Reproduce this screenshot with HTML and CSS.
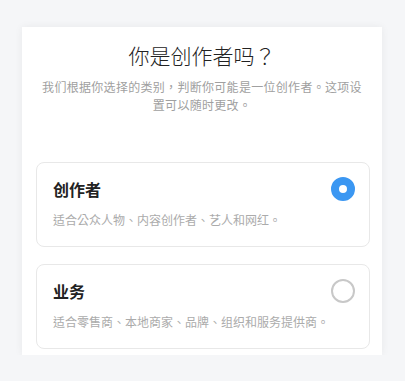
FILE: index.html
```html
<!DOCTYPE html>
<html lang="zh-Hant">
<head>
<meta charset="utf-8">
<link rel="stylesheet" href="styles.css">
</head>
<body>
<div class="panel">
  <h1 class="title">你是创作者吗？</h1>
  <p class="subtitle">我们根据你选择的类别，判断你可能是一位创作者。这项设置可以随时更改。</p>
  <div class="options">
    <div class="option">
      <div class="option-head">
        <span class="option-title">创作者</span>
        <span class="radio radio-on"></span>
      </div>
      <p class="option-desc">适合公众人物、内容创作者、艺人和网红。</p>
    </div>
    <div class="option">
      <div class="option-head">
        <span class="option-title">业务</span>
        <span class="radio"></span>
      </div>
      <p class="option-desc">适合零售商、本地商家、品牌、组织和服务提供商。</p>
    </div>
  </div>
</div>
</body>
</html>
```
FILE: styles.css
```css
html, body {
  margin: 0;
  padding: 0;
  background: #f5f6f8;
  font-family: "Noto Sans CJK TC", "Noto Sans CJK SC", sans-serif;
}
.panel {
  margin: 27px 23px 0 22px;
  width: 360px;
  background: #ffffff;
  box-shadow: 0 0 8px rgba(0, 0, 0, 0.06);
  padding: 13px 0 6px;
  box-sizing: border-box;
}
.title {
  margin: 0;
  text-align: center;
  font-size: 21px;
  line-height: 30px;
  font-weight: 300;
  color: #222;
}
.subtitle {
  margin: 8px 0 0;
  padding: 0 16px;
  text-align: center;
  font-size: 12px;
  letter-spacing: 0.3px;
  line-height: 18px;
  color: #a0a0a0;
}
.options {
  margin: 48px 12px 0 14px;
  display: flex;
  flex-direction: column;
  gap: 17px;
}
.option {
  border: 1px solid #e8e8e8;
  border-radius: 8px;
  padding: 14px 14px 17px 16px;
}
.option-head {
  display: flex;
  align-items: center;
  justify-content: space-between;
  height: 24px;
}
.option-title {
  font-size: 16px;
  font-weight: 700;
  color: #222;
}
.radio {
  width: 24px;
  height: 24px;
  box-sizing: border-box;
  border-radius: 50%;
  border: 2px solid #c8c8c8;
}
.radio-on {
  border: 8px solid #3b97f2;
  background: #fff;
}
.option-desc {
  margin: 10px 0 0;
  font-size: 12px;
  line-height: 18px;
  color: #ababab;
}
```
